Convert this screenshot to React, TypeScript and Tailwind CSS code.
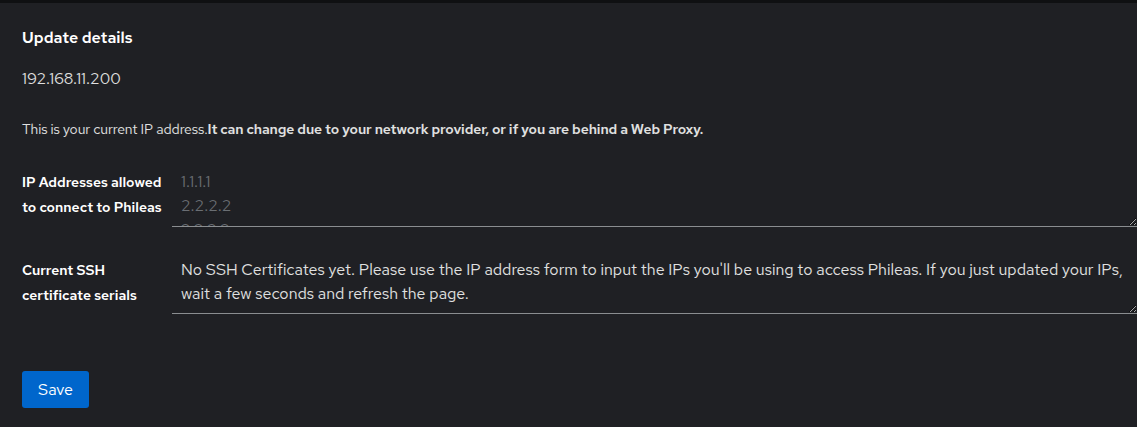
export default function App() {
  return (
    <div className="min-h-[427px] bg-[#1f2024] text-[#e0e0e0] font-['Red_Hat_Text','Open_Sans',sans-serif] border-t-[3px] border-[#0f1012]">
      <div className="px-[22px] pt-[23px]">
        <h2 className="text-base font-semibold leading-[24px] text-white">Update details</h2>
        <p className="mt-[17px] text-base leading-[24px]">192.168.11.200</p>
        <p className="mt-[28px] text-sm leading-[21px] tracking-[-0.1px]">
          This is your current IP address.
          <span className="font-semibold">It can change due to your network provider, or if you are behind a Web Proxy.</span>
        </p>

        <div className="mt-[24px] flex flex-col gap-[25px] -mr-[22px]">
          <div className="flex">
            <label className="w-[150px] shrink-0 pt-[6px] text-sm font-semibold leading-[25px] text-white">
              IP Addresses allowed to connect to Phileas
            </label>
            <textarea
              className="block h-[63px] flex-1 bg-transparent px-[9px] pt-[6px] text-base leading-[24px] text-[#e0e0e0] placeholder:text-[#6a6e73] border-b border-[#8a8d90] outline-none"
              placeholder={"1.1.1.1\n2.2.2.2\n3.3.3.3"}
            />
          </div>
          <div className="flex">
            <label className="w-[150px] shrink-0 pt-[6px] text-sm font-semibold leading-[25px] text-white">
              Current SSH certificate serials
            </label>
            <textarea
              className="block h-[62px] flex-1 bg-transparent px-[9px] pt-[6px] text-base leading-[24px] text-[#e0e0e0] border-b border-[#8a8d90] outline-none"
              readOnly
              defaultValue="No SSH Certificates yet. Please use the IP address form to input the IPs you'll be using to access Phileas. If you just updated your IPs, wait a few seconds and refresh the page."
            />
          </div>
        </div>

        <button className="mt-[57px] h-[37px] w-[67px] rounded-[3px] bg-[#0066cc] text-base text-white">
          Save
        </button>
      </div>
    </div>
  );
}
